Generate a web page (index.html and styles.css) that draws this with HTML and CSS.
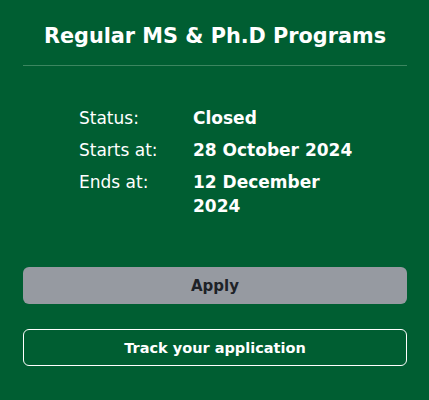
FILE: index.html
```html
<!DOCTYPE html>
<html lang="en">
<head>
  <meta charset="UTF-8">
  <title>Regular MS &amp; Ph.D Programs</title>
  <link rel="stylesheet" href="styles.css">
</head>
<body>
  <div class="card">
    <h2 class="titulo">Regular MS &amp; Ph.D Programs</h2>

    <div class="detalhes">
      <div class="linha"><span class="label">Status:</span> <span class="valor">Closed</span></div>
      <div class="linha"><span class="label">Starts at:</span> <span class="valor">28 October 2024</span></div>
      <div class="linha"><span class="label">Ends at:</span> <span class="valor">12 December 2024</span></div>
    </div>

    <button class="btn btn-apply" disabled>Apply</button>
    <button class="btn btn-track">Track your application</button>
  </div>
</body>
</html>
```

FILE: styles.css
```css
body {
  margin: 0;
  background: #005e32;
  font-family: "DejaVu Sans", Inter, sans-serif;
  color: #fff;
}
.card {
  padding: 21px 22px 30px 23px;
}
.titulo {
  margin: 0;
  padding-bottom: 14px;
  border-bottom: 1px solid #3c8660;
  font-size: 20.8px;
  line-height: 30px;
  font-weight: 700;
  text-align: center;
}
.detalhes {
  margin: 40px 0 0 56px;
  width: 282px;
}
.linha {
  display: grid;
  grid-template-columns: 114px 168px;
  font-size: 17px;
  line-height: 24px;
  margin-bottom: 8px;
}
.label {
  font-weight: 400;
}
.valor {
  font-weight: 700;
}
.btn {
  display: block;
  width: 100%;
  height: 37px;
  border-radius: 6px;
  font-family: inherit;
  font-size: 15px;
  font-weight: 700;
}
.btn-apply {
  margin-top: 49px;
  background: #969aa1;
  color: #1e2227;
  border: none;
}
.btn-track {
  margin-top: 25px;
  background: transparent;
  color: #fff;
  border: 1px solid #fff;
  font-size: 14.5px;
}
```
